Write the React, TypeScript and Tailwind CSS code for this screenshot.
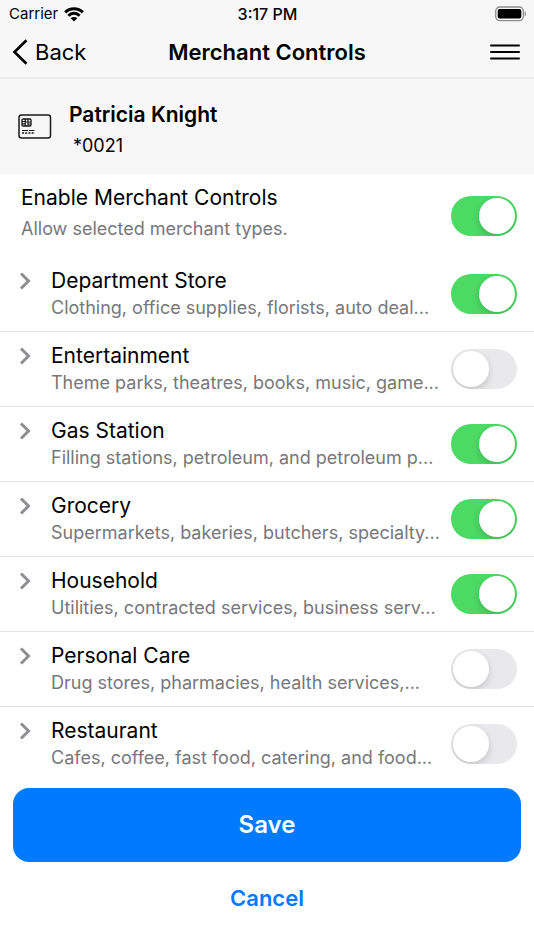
import { useState } from "react";

type Category = { name: string; detail: string; enabled: boolean };

const initialCategories: Category[] = [
  { name: "Department Store", detail: "Clothing, office supplies, florists, auto deal...", enabled: true },
  { name: "Entertainment", detail: "Theme parks, theatres, books, music, game...", enabled: false },
  { name: "Gas Station", detail: "Filling stations, petroleum, and petroleum p...", enabled: true },
  { name: "Grocery", detail: "Supermarkets, bakeries, butchers, specialty...", enabled: true },
  { name: "Household", detail: "Utilities, contracted services, business serv...", enabled: true },
  { name: "Personal Care", detail: "Drug stores, pharmacies, health services,...", enabled: false },
  { name: "Restaurant", detail: "Cafes, coffee, fast food, catering, and food...", enabled: false },
];

function Toggle({ label, checked, onChange }: { label: string; checked: boolean; onChange: () => void }) {
  return (
    <input
      type="checkbox"
      role="switch"
      aria-label={label}
      checked={checked}
      onChange={onChange}
      className="h-10 w-[66px] shrink-0 cursor-pointer appearance-none overflow-hidden rounded-full bg-[#e9e9eb] p-0.5 before:block before:size-9 before:rounded-full before:bg-white before:shadow-[0_3px_7px_rgba(0,0,0,0.16)] before:transition-transform checked:bg-[#4cd964] checked:before:translate-x-[26px]"
    />
  );
}

function StatusBar() {
  return (
    <div className="grid h-7 grid-cols-[1fr_auto_1fr] items-center pr-2 pl-[9px] text-[15px] leading-5">
      <div className="flex items-center gap-1.5">
        <span>Carrier</span>
        <svg width="20" height="15" viewBox="0 0 20 15" fill="none" stroke="#000" strokeWidth="3" aria-hidden="true">
          <path d="M1.2 5.4a12.4 12.4 0 0 1 17.6 0" />
          <path d="M4.4 8.7a7.9 7.9 0 0 1 11.2 0" />
          <path d="M10 14.6 6.7 11.3a4.7 4.7 0 0 1 6.6 0z" fill="#000" stroke="none" />
        </svg>
      </div>
      <span className="text-center text-base leading-5 font-medium">3:17 PM</span>
      <svg className="justify-self-end" width="32" height="16" viewBox="0 0 32 16" aria-hidden="true">
        <rect x="1.7" y="1" width="27.6" height="13.6" rx="4" fill="none" stroke="#8e8e8e" strokeWidth="1.3" />
        <rect x="3.7" y="3" width="23.6" height="9.6" rx="2" fill="#000" />
        <path d="M30.6 5.300v5c1.9-.9 1.9-4.100 0-5z" fill="#8e8e8e" />
      </svg>
    </div>
  );
}

function CardIcon() {
  return (
    <svg width="34" height="26" viewBox="0 0 34 26" fill="none" stroke="#1a1a1a" aria-hidden="true">
      <rect x="1" y="1" width="31.5" height="23" rx="2.5" strokeWidth="1.5" />
      <rect x="4" y="5" width="9" height="7" rx="1" strokeWidth="1.3" />
      <path d="M4 7.500h3M4 9.800h3M7.200 5v7M10 12V8h3M10 10h3M7.200 8H10V5" strokeWidth="1.2" />
      <path d="M4 16.500h6M11 16.500h5.500" strokeWidth="1.2" />
      <path d="M4 19h13" strokeWidth="1.3" strokeDasharray="2 1.2" />
    </svg>
  );
}

export default function App() {
  const [enabled, setEnabled] = useState(true);
  const [categories, setCategories] = useState(initialCategories);

  const toggleCategory = (name: string) =>
    setCategories((list) => list.map((c) => (c.name === name ? { ...c, enabled: !c.enabled } : c)));

  return (
    <div className="min-h-screen bg-white font-['Inter',sans-serif] text-black">
      <header className="border-b-2 border-[#ebebec] bg-[#f7f7f7]">
        <StatusBar />
        <nav className="grid h-[49px] grid-cols-[1fr_auto_1fr] items-center px-3 pb-0.5">
          <button type="button" className="flex items-center gap-[7px] justify-self-start text-[22px] leading-7">
            <svg width="16" height="26" viewBox="0 0 16 26" fill="none" stroke="#000" strokeWidth="2.6" aria-hidden="true">
              <path d="M14.500 1.200 2.500 13l12 11.800" />
            </svg>
            Back
          </button>
          <h1 className="text-[22px] leading-7 font-semibold">Merchant Controls</h1>
          <button type="button" aria-label="Menu" className="justify-self-end">
            <svg width="34" height="18" viewBox="0 0 34 18" stroke="#000" strokeWidth="2" strokeLinecap="round" aria-hidden="true">
              <path d="M3 2.500h28M3 9h28M3 15.500h28" />
            </svg>
          </button>
        </nav>
      </header>

      <section className="flex h-[95px] items-center gap-[17px] bg-[#f7f7f7] px-[18px]">
        <CardIcon />
        <div className="pt-[7px]">
          <h2 className="text-[21px] leading-8 font-semibold">Patricia Knight</h2>
          <p className="pl-1 text-lg leading-[30px]">*0021</p>
        </div>
      </section>

      <main>
        <section className="flex h-[83px] items-center justify-between pr-[17px] pl-[21px]">
          <div className="pb-[5px]">
            <h2 className="text-[21px] leading-8">Enable Merchant Controls</h2>
            <p className="text-lg leading-[30px] text-[#77777c]">Allow selected merchant types.</p>
          </div>
          <Toggle label="Enable Merchant Controls" checked={enabled} onChange={() => setEnabled(!enabled)} />
        </section>

        <ul>
          {categories.map((c) => (
            <li
              key={c.name}
              className="flex h-[75px] items-center border-b border-[#e2e2e4] pr-[17px] pl-[18px] last:border-transparent"
            >
              <button type="button" aria-label={`Show ${c.name}`} className="mt-[15px] self-start">
                <svg width="14" height="18" viewBox="0 0 14 18" fill="none" stroke="#8e8e93" strokeWidth="3" aria-hidden="true">
                  <path d="m3 1.500 7.500 7.500L3 16.500" />
                </svg>
              </button>
              <div className="ml-[19px] min-w-0 flex-1">
                <h3 className="text-[21px] leading-7">{c.name}</h3>
                <p className="text-lg leading-[26px] whitespace-nowrap text-[#77777c]">{c.detail}</p>
              </div>
              <Toggle label={c.name} checked={c.enabled} onChange={() => toggleCategory(c.name)} />
            </li>
          ))}
        </ul>
      </main>

      <footer className="flex flex-col items-stretch px-[13px] pt-[6px]">
        <button type="button" className="h-[74px] rounded-2xl bg-[#007aff] text-2xl leading-8 font-semibold text-white">
          Save
        </button>
        <button type="button" className="h-[72px] text-[22px] leading-8 font-semibold text-[#007aff]">
          Cancel
        </button>
      </footer>
    </div>
  );
}
